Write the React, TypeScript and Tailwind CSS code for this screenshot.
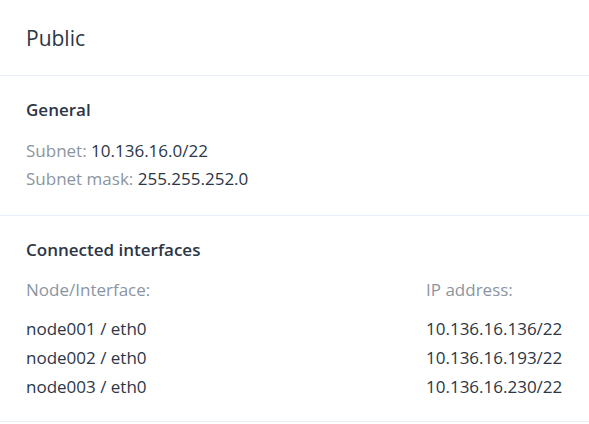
const ROWS = [
  { node: "node001 / eth0", ip: "10.136.16.136/22" },
  { node: "node002 / eth0", ip: "10.136.16.193/22" },
  { node: "node003 / eth0", ip: "10.136.16.230/22" },
];

export default function App() {
  return (
    <div
      className="bg-white text-[#2c3646] min-h-screen"
      style={{ fontFamily: '"Open Sans", "Noto Sans", sans-serif' }}
    >
      <header className="px-[26px] pt-[23px] pb-[22px] border-b border-[#eaf0f7]">
        <h1 className="text-[21px] leading-[30px] font-normal">Public</h1>
      </header>

      <section className="px-[26px] py-[22px] border-b border-[#eaf0f7]">
        <h2 className="text-[17px] leading-[24px] font-semibold">General</h2>
        <div className="mt-[15px] text-[17px] leading-[28px]">
          <p>
            <span className="text-[#8b95a1]">Subnet: </span>10.136.16.0/22
          </p>
          <p>
            <span className="text-[#8b95a1]">Subnet mask: </span>255.255.252.0
          </p>
        </div>
      </section>

      <section className="px-[26px] pt-[22px] pb-[20px] border-b border-[#eaf0f7]">
        <h2 className="text-[17px] leading-[24px] font-semibold">Connected interfaces</h2>
        <div className="mt-[14px] flex justify-between text-[17px] leading-[28px] text-[#8b95a1]">
          <span>Node/Interface:</span>
          <span className="w-[137px]">IP address:</span>
        </div>
        <ul className="mt-[10px] text-[17px] leading-[29px]">
          {ROWS.map((r) => (
            <li key={r.node} className="flex justify-between">
              <span>{r.node}</span>
              <span className="w-[137px]">{r.ip}</span>
            </li>
          ))}
        </ul>
      </section>
    </div>
  );
}
